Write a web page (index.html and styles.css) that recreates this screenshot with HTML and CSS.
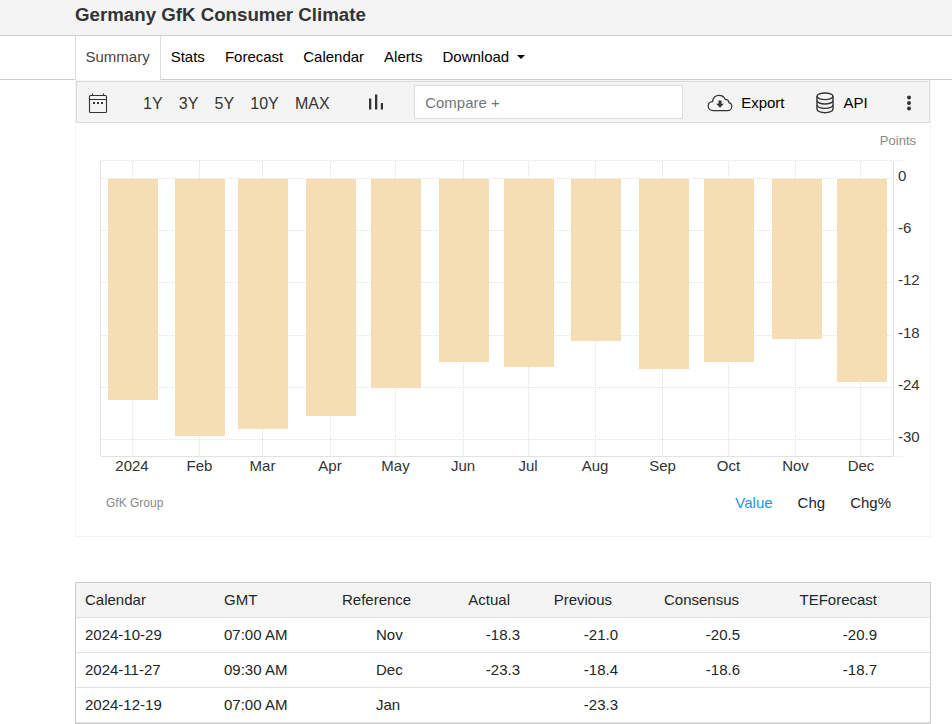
FILE: index.html
```
<!DOCTYPE html>
<html lang="en">
<head>
  <meta charset="UTF-8">
  <title>Germany GfK Consumer Climate</title>
  <link rel="stylesheet" href="styles.css">
</head>
<body>
  <header class="page-header">
    <h1>Germany GfK Consumer Climate</h1>
  </header>

  <nav class="tabs">
    <a class="tab active">Summary</a>
    <a class="tab">Stats</a>
    <a class="tab">Forecast</a>
    <a class="tab">Calendar</a>
    <a class="tab">Alerts</a>
    <a class="tab">Download <span class="caret"></span></a>
  </nav>

  <main class="container">
    <section class="card">
      <div class="toolbar">
        <svg class="icon-calendar" width="20" height="20" viewBox="0 0 20 20">
          <rect x="1.5" y="2.5" width="17" height="17" rx="1" fill="none" stroke="#333" stroke-width="1.1"/>
          <path d="M1.5 6.5h17M4.5 .5v2M15.5 .5v2" fill="none" stroke="#333" stroke-width="1.1"/>
          <path d="M5 9h2v2H5zM9 9h2v2H9zM13 9h2v2h-2z" fill="#333"/>
        </svg>
        <div class="ranges">
          <a>1Y</a>
          <a>3Y</a>
          <a>5Y</a>
          <a>10Y</a>
          <a>MAX</a>
        </div>
        <svg class="icon-bars" width="14" height="16" viewBox="0 0 14 16">
          <path d="M0 4.5h2.3v11H0zM6 .5h2.3v15H6zM11.8 9H14v6.5h-2.2z" fill="#333"/>
        </svg>
        <input class="compare" type="text" placeholder="Compare +">
        <a class="tool export">
          <svg width="26" height="18" viewBox="0 0 26 18">
            <path d="M6.2 16.6C3.2 16.6 1.2 14.7 1.2 12.2s1.7-4.3 4.3-4.5C6 3.6 8.8 1.3 12.1 1.3c3.1 0 5.1 1.5 6.2 4.1 2.1-.1 3.6 1.3 3.6 3.3 1.9.4 2.9 1.9 2.9 3.8 0 2.4-1.9 4.1-4.3 4.1z" fill="none" stroke="#333" stroke-width="1.2"/>
            <path d="M11.5 6.5h3v3.3h2.3L13 13.8 9.2 9.8h2.3z" fill="#333"/>
          </svg>
          Export
        </a>
        <a class="tool api">
          <svg width="18" height="22" viewBox="0 0 18 22">
            <g fill="none" stroke="#333" stroke-width="1.4">
              <ellipse cx="9" cy="4.3" rx="8" ry="3.3"/>
              <path d="M1 4.3v13c0 1.9 3.6 3.4 8 3.4s8-1.5 8-3.4v-13"/>
              <path d="M1 8.6c0 1.9 3.6 3.4 8 3.4s8-1.5 8-3.4M1 13c0 1.9 3.6 3.4 8 3.4s8-1.5 8-3.4"/>
            </g>
          </svg>
          API
        </a>
        <svg class="icon-more" width="4" height="16" viewBox="0 0 4 16">
          <g fill="#333"><circle cx="2" cy="2.5" r="2"/><circle cx="2" cy="8" r="2"/><circle cx="2" cy="13.5" r="2"/></g>
        </svg>
      </div>

      <svg class="chart" width="854" height="362" viewBox="0 0 854 362">
        <text class="unit" x="840" y="22" text-anchor="end">Points</text>

        <g class="grid">
          <path d="M25 37.5H817M25 55.5H817M25 107.5H817M25 159.5H817M25 212.5H817M25 264.5H817M25 316.5H817"/>
          <path d="M56.5 38V333M123.5 38V333M186.5 38V333M254.5 38V333M319.5 38V333M387.5 38V333M452.5 38V333M519.5 38V333M586.5 38V333M652.5 38V333M719.5 38V333M784.5 38V333"/>
        </g>

        <g class="bars">
          <rect x="32" y="56" width="50" height="221"/>
          <rect x="99" y="56" width="50" height="257"/>
          <rect x="162" y="56" width="50" height="250"/>
          <rect x="230" y="56" width="50" height="237"/>
          <rect x="295" y="56" width="50" height="209"/>
          <rect x="363" y="56" width="50" height="183"/>
          <rect x="428" y="56" width="50" height="188"/>
          <rect x="495" y="56" width="50" height="162"/>
          <rect x="563" y="56" width="50" height="190"/>
          <rect x="628" y="56" width="50" height="183"/>
          <rect x="696" y="56" width="50" height="160"/>
          <rect x="761" y="56" width="50" height="203"/>
        </g>

        <path class="axis" d="M24.5 38V333M25 333.5H817.5V38"/>
        <path class="tick" d="M818 37.5H827M818 333.5H827"/>

        <g class="labels" text-anchor="middle">
          <text x="56" y="348">2024</text>
          <text x="123.5" y="348">Feb</text>
          <text x="186.5" y="348">Mar</text>
          <text x="254" y="348">Apr</text>
          <text x="319.5" y="348">May</text>
          <text x="387" y="348">Jun</text>
          <text x="452" y="348">Jul</text>
          <text x="519" y="348">Aug</text>
          <text x="586.5" y="348">Sep</text>
          <text x="652.5" y="348">Oct</text>
          <text x="719.5" y="348">Nov</text>
          <text x="785" y="348">Dec</text>
        </g>
        <g class="labels">
          <text x="822" y="58">0</text>
          <text x="822" y="110">-6</text>
          <text x="822" y="162">-12</text>
          <text x="822" y="215">-18</text>
          <text x="822" y="267">-24</text>
          <text x="822" y="319">-30</text>
        </g>
      </svg>

      <div class="card-footer">
        <span class="source">GfK Group</span>
        <a class="selected">Value</a>
        <a>Chg</a>
        <a>Chg%</a>
      </div>
    </section>

    <table class="calendar">
      <colgroup>
        <col class="c-date"><col class="c-time"><col class="c-ref"><col class="c-actual">
        <col class="c-previous"><col class="c-consensus"><col class="c-forecast"><col>
      </colgroup>
      <thead>
        <tr>
          <th>Calendar</th>
          <th>GMT</th>
          <th>Reference</th>
          <th class="num actual">Actual</th>
          <th class="num previous">Previous</th>
          <th class="num consensus">Consensus</th>
          <th class="num">TEForecast</th>
          <th></th>
        </tr>
      </thead>
      <tbody>
        <tr>
          <td>2024-10-29</td><td>07:00 AM</td><td class="ref">Nov</td>
          <td class="num">-18.3</td><td class="num">-21.0</td><td class="num">-20.5</td><td class="num">-20.9</td><td></td>
        </tr>
        <tr>
          <td>2024-11-27</td><td>09:30 AM</td><td class="ref">Dec</td>
          <td class="num">-23.3</td><td class="num">-18.4</td><td class="num">-18.6</td><td class="num">-18.7</td><td></td>
        </tr>
        <tr>
          <td>2024-12-19</td><td>07:00 AM</td><td class="ref">Jan</td>
          <td class="num"></td><td class="num">-23.3</td><td class="num"></td><td class="num"></td><td></td>
        </tr>
      </tbody>
    </table>
  </main>
</body>
</html>
```
FILE: styles.css
```
* {
  box-sizing: border-box;
}
body {
  margin: 0;
  font-family: "Liberation Sans", Arial, sans-serif;
  font-size: 15px;
  color: #212529;
  background-color: #fff;
}
.page-header {
  height: 36px;
  padding-left: 75px;
  background-color: #f4f4f4;
  border-bottom: 1px solid #ccc;
}
h1 {
  margin: 0;
  font-size: 18.7px;
  line-height: 29px;
  color: #333;
}

/* tabs */
.tabs {
  display: flex;
  height: 44px;
  padding-left: 75px;
  border-bottom: 1px solid #ccc;
}
.tab {
  height: 43px;
  padding: 0 10px;
  line-height: 42px;
  color: #000;
}
.tab.active {
  height: 44px;
  padding: 0 10px 0 9.5px;
  border-left: 1px solid #ddd;
  border-right: 1px solid #ddd;
  background-color: #fff;
  color: #444;
}
.caret {
  display: inline-block;
  margin-left: 4px;
  vertical-align: 3px;
  border-top: 4px solid #000;
  border-left: 4px solid transparent;
  border-right: 4px solid transparent;
}

.container {
  width: 856px;
  margin-left: 75px;
}
.card {
  height: 457px;
  border: 1px solid #f3f3f3;
}

/* toolbar */
.toolbar {
  display: flex;
  align-items: center;
  height: 42px;
  padding-left: 11px;
  background-color: #f4f4f4;
  border: 1px solid #dcdcdc;
}
.icon-calendar {
  margin-top: 2px;
}
.ranges {
  display: flex;
  gap: 16.2px;
  margin-left: 35px;
  padding-top: 3px;
  font-size: 16px;
  color: #333;
}
.icon-bars {
  margin-left: 39px;
}
.compare {
  width: 269px;
  height: 34px;
  margin: 0 0 0 31px;
  padding: 0 10px 0 10.5px;
  border: 1px solid #deded5;
  font: inherit;
}
.compare::placeholder {
  color: #757575;
}
.tool {
  display: flex;
  align-items: center;
  gap: 8px;
  color: #000;
}
.export {
  margin-left: 24.5px;
}
.export svg {
  margin-top: 2px;
}
.api {
  margin-left: 32px;
}
.api svg {
  margin-top: 2px;
  margin-right: 1px;
}
.icon-more {
  margin-top: 2px;
  margin-left: 39.5px;
}

/* chart */
.chart {
  display: block;
}
.chart .unit {
  font-size: 13px;
  fill: #888;
}
.chart .grid {
  fill: none;
  stroke: #e2e2e2;
  stroke-dasharray: 1 1;
}
.chart .bars {
  fill: #f5deb3;
}
.chart .axis {
  fill: none;
  stroke: #e2e2e2;
}
.chart .tick {
  stroke: #f3f3f3;
}
.chart .labels {
  fill: #333;
}
.card-footer {
  display: flex;
  align-items: center;
  gap: 25px;
  height: 34px;
  padding: 0 39px 0 30px;
}
.source {
  margin-right: auto;
  padding-top: 1px;
  font-size: 12px;
  color: #888;
}
.selected {
  color: #2196f3;
}

/* calendar table */
.calendar {
  width: 856px;
  margin-top: 45px;
  table-layout: fixed;
  border: 1px solid #ccc;
  border-spacing: 0;
}
.calendar th,
.calendar td {
  height: 35px;
  padding: 0 9px 2px;
  border-bottom: 1px solid #dee2e6;
  font-weight: normal;
  text-align: left;
}
.calendar th {
  background-color: #f4f4f4;
}
.calendar .num {
  padding: 0 10px 2px 0;
  text-align: right;
}
.calendar .actual {
  padding-right: 20px;
}
.calendar .previous {
  padding-right: 16px;
}
.calendar .consensus {
  padding-right: 11px;
}
.calendar .ref {
  padding-left: 43px;
}
.c-date {
  width: 139px;
}
.c-time {
  width: 118px;
}
.c-ref {
  width: 117px;
}
.c-actual {
  width: 80px;
}
.c-previous {
  width: 98px;
}
.c-consensus {
  width: 122px;
}
.c-forecast {
  width: 137px;
}
```
